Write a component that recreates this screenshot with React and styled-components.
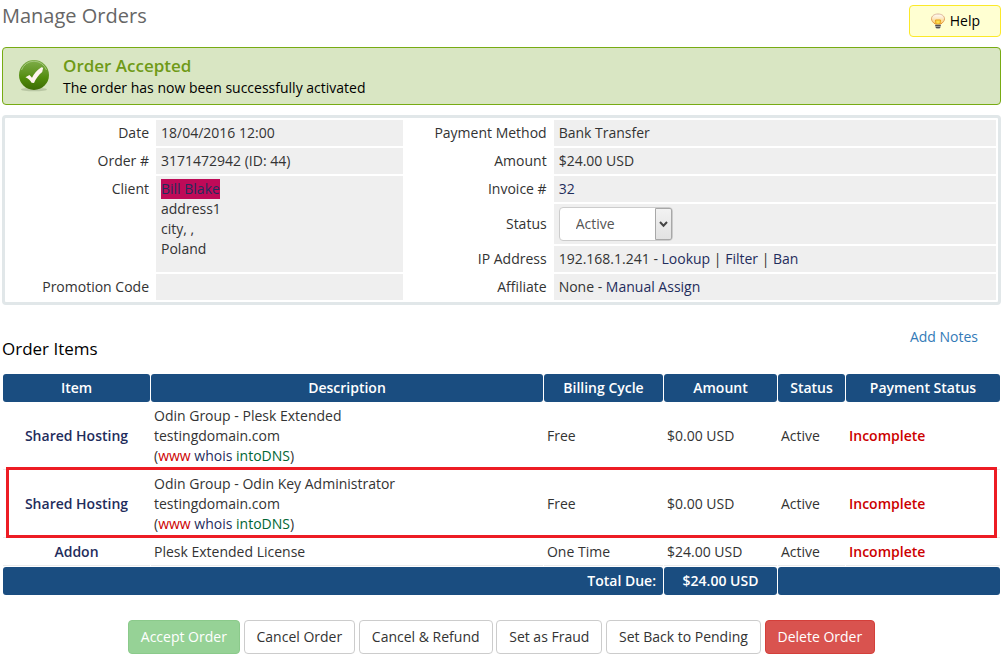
import React, { useState } from 'react';
import styled, { createGlobalStyle } from 'styled-components';

// Global styles
const GlobalStyle = createGlobalStyle`
  * {
    box-sizing: border-box;
  }

  body {
    font-family: 'Open Sans', 'Noto Sans', sans-serif;
    font-size: 14px;
    line-height: 20px;
    color: #333;
    background-color: #fff;
    margin: 0;
  }

  a {
    color: #1f2d5c;
    text-decoration: none;
  }
`;

const Page = styled.main`
  padding: 5px 4px 14px 2px;
`;

// Page header
const Header = styled.header`
  display: flex;
  justify-content: space-between;
  align-items: flex-start;
  margin-bottom: 10px;
`;

const Title = styled.h1`
  margin: 0;
  font-size: 20px;
  line-height: 22px;
  font-weight: 400;
  color: #666;
`;

const HelpButton = styled.button`
  display: flex;
  align-items: center;
  gap: 4px;
  padding: 5px 20px;
  font: inherit;
  color: #000;
  background-color: #ffffd2;
  border: 1px solid #fbe92a;
  border-radius: 4px;
  cursor: pointer;
`;

// Success message
const SuccessBox = styled.div`
  display: flex;
  align-items: center;
  gap: 13px;
  padding: 6px 15px;
  margin-bottom: 10px;
  color: #000;
  background-color: #d9e6c3;
  border: 1px solid #77ab13;
  border-radius: 4px;
`;

const SuccessTitle = styled.strong`
  display: block;
  font-size: 17px;
  line-height: 24px;
  font-weight: 600;
  color: #6f9a17;
`;

// Order details
const DetailsBox = styled.section`
  border: 3px solid #e1e7e9;
  border-radius: 4px;
  margin-bottom: 22px;
`;

const DetailsTable = styled.table`
  width: 100%;
  table-layout: fixed;
  border-collapse: separate;
  border-spacing: 2px;
`;

const Col = styled.col`
  width: ${({ $width = 'auto' }) => $width};
`;

const Label = styled.th`
  padding: 3px 5px;
  font-weight: 400;
  text-align: right;
  vertical-align: ${({ $top }) => ($top ? 'top' : 'middle')};
`;

const Value = styled.td`
  height: 26px;
  padding: 3px 5px;
  background-color: #efefef;
  vertical-align: ${({ $top }) => ($top ? 'top' : 'middle')};
`;

const ClientLink = styled.a`
  display: inline-block;
  background-color: #bf0a58;
`;

const SelectWrap = styled.div`
  position: relative;
  width: 114px;
`;

const StatusSelect = styled.select`
  display: block;
  width: 100%;
  height: 34px;
  padding: 6px 16px;
  appearance: none;
  font: inherit;
  color: #555;
  background-color: #fff;
  border: 1px solid #ccc;
  border-radius: 4px;
`;

const SelectArrow = styled.span`
  position: absolute;
  top: 1px;
  right: 1px;
  bottom: 1px;
  width: 17px;
  display: flex;
  align-items: center;
  justify-content: center;
  background: linear-gradient(#f2f2f2, #e2e2e2);
  border: 1px solid #a8a8a8;
  border-radius: 0 2px 2px 0;
  pointer-events: none;
`;

// Order items
const ItemsHeader = styled.div`
  display: flex;
  justify-content: space-between;
  align-items: flex-start;
  padding-right: 23px;
  margin-bottom: 14px;
`;

const SectionTitle = styled.h2`
  margin: 12px 0 0;
  font-size: 17px;
  line-height: 20px;
  font-weight: 400;
  color: #000;
`;

const NotesLink = styled.a`
  color: #337ab7;
`;

const ItemsTable = styled.table`
  width: 100%;
  table-layout: fixed;
  border-collapse: separate;
  border-spacing: 1px;
  margin-bottom: 24px;
`;

const HeadCell = styled.th`
  height: 28px;
  padding: 4px 7px;
  font-weight: 600;
  text-align: ${({ $align }) => $align || 'center'};
  color: #fff;
  background-color: #1a4d80;
  border-radius: 3px;
`;

const Cell = styled.td`
  padding: 3px;
  text-align: ${({ $align }) => $align || 'left'};
  border-bottom: 1px solid #ebebeb;
`;

// The frame hangs on the first cell, a pseudo-element on the row adds a column
const ItemRow = styled.tr`
  position: relative;

  ${({ $marked }) =>
    $marked &&
    `
    & > td:first-child::after {
      content: '';
      position: absolute;
      top: -4px;
      right: 3px;
      bottom: 0;
      left: 3px;
      border: 3px solid #ed1c24;
      pointer-events: none;
    }
  `}
`;

const ItemLink = styled.a`
  font-weight: 600;
`;

const WwwLink = styled.a`
  color: #c00;
`;

const DnsLink = styled.a`
  color: #063;
`;

const PaymentStatus = styled.span`
  font-weight: 600;
  color: #c00;
`;

// Buttons
const Actions = styled.div`
  text-align: center;
`;

const variants = {
  default: { color: '#333', background: '#fff', border: '#ccc' },
  success: { color: '#fff', background: '#96d296', border: '#8bca8b' },
  danger: { color: '#fff', background: '#d9534f', border: '#d43f3a' },
};

const ActionButton = styled.button`
  padding: 6px 12px;
  font: inherit;
  color: ${({ $variant = 'default' }) => variants[$variant].color};
  background-color: ${({ $variant = 'default' }) => variants[$variant].background};
  border: 1px solid ${({ $variant = 'default' }) => variants[$variant].border};
  border-radius: 4px;
  cursor: pointer;
`;

const BulbIcon = () => (
  <svg width="16" height="16" viewBox="0 0 16 16" aria-hidden="true">
    <defs>
      <linearGradient id="bulb" x1="0" y1="0" x2="0" y2="1">
        <stop offset="0" stopColor="#fffdf8" />
        <stop offset="0.4" stopColor="#fdebc8" />
        <stop offset="1" stopColor="#f9cf62" />
      </linearGradient>
      <linearGradient id="bulbEdge" x1="0" y1="0" x2="0" y2="1">
        <stop offset="0" stopColor="#d9b59c" />
        <stop offset="1" stopColor="#e58f35" />
      </linearGradient>
    </defs>
    <path
      d="M8 1C4.200 1 1.500 3 1.500 5.800c0 2.200 1.700 3.900 3.700 5.200h5.600c2-1.300 3.700-3 3.700-5.200C14.500 3 11.800 1 8 1z"
      fill="url(#bulb)"
      stroke="url(#bulbEdge)"
      strokeWidth="1"
    />
    <path d="M5.500 7h5l-.5 4H6z" fill="#fde04e" stroke="#e5a01f" strokeWidth="1" />
    <path d="M5.300 11.500h5.400v2.200L9.500 15.700h-3l-1.200-2z" fill="#9c9c9c" />
    <path d="M5.300 12.500h5.400M5.800 14.500h4.400" stroke="#505050" strokeWidth="1" />
  </svg>
);

const CheckIcon = () => (
  <svg width="32" height="34" viewBox="0 0 32 34" aria-hidden="true">
    <defs>
      <linearGradient id="ball" x1="0" y1="0" x2="0" y2="1">
        <stop offset="0" stopColor="#7fae4a" />
        <stop offset="0.450" stopColor="#5f9420" />
        <stop offset="0.600" stopColor="#518c0c" />
        <stop offset="1" stopColor="#3d6b04" />
      </linearGradient>
    </defs>
    <ellipse cx="16" cy="30.500" rx="13" ry="1.800" fill="#9aa886" opacity="0.500" />
    <circle cx="16" cy="16" r="15" fill="url(#ball)" />
    <path d="M3.500 11a13.300 13.300 0 0 1 25 0" fill="none" stroke="#a3c77a" strokeWidth="1" />
    <path
      d="M7.500 18.300l4-2.300 2.500 2.800c2-4.400 5-7.600 9.400-10.500l1.800.4-1 4.200c-3.600 3-6.200 6.400-8.200 11l-2.400-.200c-1.400-2.400-3.400-4.200-6.100-5.400z"
      fill="#fff4ee"
    />
  </svg>
);

const items = [
  {
    id: 1,
    name: 'Shared Hosting',
    description: 'Odin Group - Plesk Extended',
    domain: 'testingdomain.com',
    cycle: 'Free',
    amount: '$0.00 USD',
  },
  {
    id: 2,
    name: 'Shared Hosting',
    description: 'Odin Group - Odin Key Administrator',
    domain: 'testingdomain.com',
    cycle: 'Free',
    amount: '$0.00 USD',
    marked: true,
  },
  {
    id: 3,
    name: 'Addon',
    description: 'Plesk Extended License',
    cycle: 'One Time',
    amount: '$24.00 USD',
  },
];

const App = () => {
  const [status, setStatus] = useState('Active');

  return (
    <>
      <GlobalStyle />
      <Page>
        <Header>
          <Title>Manage Orders</Title>
          <HelpButton type="button">
            <BulbIcon />
            Help
          </HelpButton>
        </Header>

        <SuccessBox role="status">
          <CheckIcon />
          <div>
            <SuccessTitle>Order Accepted</SuccessTitle>
            The order has now been successfully activated
          </div>
        </SuccessBox>

        <DetailsBox>
          <DetailsTable>
            <colgroup>
              <Col $width="147px" />
              <Col />
              <Col $width="147px" />
              <Col $width="45%" />
            </colgroup>
            <tbody>
              <tr>
                <Label scope="row">Date</Label>
                <Value>18/04/2016 12:00</Value>
                <Label scope="row">Payment Method</Label>
                <Value>Bank Transfer</Value>
              </tr>
              <tr>
                <Label scope="row">Order #</Label>
                <Value>3171472942 (ID: 44)</Value>
                <Label scope="row">Amount</Label>
                <Value>$24.00 USD</Value>
              </tr>
              <tr>
                <Label scope="row" rowSpan={3} $top>Client</Label>
                <Value rowSpan={3} $top>
                  <ClientLink href="#client">Bill Blake</ClientLink>
                  <br />
                  address1
                  <br />
                  city, ,
                  <br />
                  Poland
                </Value>
                <Label scope="row">Invoice #</Label>
                <Value><a href="#invoice">32</a></Value>
              </tr>
              <tr>
                <Label scope="row">
                  <label htmlFor="status">Status</label>
                </Label>
                <Value>
                  <SelectWrap>
                    <StatusSelect
                      id="status"
                      value={status}
                      onChange={(e) => setStatus(e.target.value)}
                    >
                      <option>Active</option>
                    </StatusSelect>
                    <SelectArrow>
                      <svg width="9" height="7" viewBox="0 0 9 7" aria-hidden="true">
                        <path d="M1 1l3.500 3.700L8 1" fill="none" stroke="#444" strokeWidth="2" />
                      </svg>
                    </SelectArrow>
                  </SelectWrap>
                </Value>
              </tr>
              <tr>
                <Label scope="row">IP Address</Label>
                <Value>
                  192.168.1.241 - <a href="#lookup">Lookup</a> | <a href="#filter">Filter</a> |{' '}
                  <a href="#ban">Ban</a>
                </Value>
              </tr>
              <tr>
                <Label scope="row">Promotion Code</Label>
                <Value />
                <Label scope="row">Affiliate</Label>
                <Value>
                  None - <a href="#assign">Manual Assign</a>
                </Value>
              </tr>
            </tbody>
          </DetailsTable>
        </DetailsBox>

        <ItemsHeader>
          <SectionTitle>Order Items</SectionTitle>
          <NotesLink href="#notes">Add Notes</NotesLink>
        </ItemsHeader>

        <ItemsTable>
          <colgroup>
            <Col $width="147px" />
            <Col />
            <Col $width="12%" />
            <Col $width="113px" />
            <Col $width="67px" />
            <Col $width="154px" />
          </colgroup>
          <thead>
            <tr>
              <HeadCell>Item</HeadCell>
              <HeadCell>Description</HeadCell>
              <HeadCell>Billing Cycle</HeadCell>
              <HeadCell>Amount</HeadCell>
              <HeadCell>Status</HeadCell>
              <HeadCell>Payment Status</HeadCell>
            </tr>
          </thead>
          <tbody>
            {items.map((item) => (
              <ItemRow key={item.id} $marked={item.marked}>
                <Cell $align="center">
                  <ItemLink href="#item">{item.name}</ItemLink>
                </Cell>
                <Cell>
                  {item.description}
                  {item.domain && (
                    <>
                      <br />
                      {item.domain}
                      <br />
                      (<WwwLink href="#www">www</WwwLink> <a href="#whois">whois</a>{' '}
                      <DnsLink href="#dns">intoDNS</DnsLink>)
                    </>
                  )}
                </Cell>
                <Cell>{item.cycle}</Cell>
                <Cell>{item.amount}</Cell>
                <Cell>Active</Cell>
                <Cell>
                  <PaymentStatus>Incomplete</PaymentStatus>
                </Cell>
              </ItemRow>
            ))}
          </tbody>
          <tfoot>
            <tr>
              <HeadCell as="td" colSpan={3} $align="right">Total Due:</HeadCell>
              <HeadCell as="td">$24.00 USD</HeadCell>
              <HeadCell as="td" colSpan={2} />
            </tr>
          </tfoot>
        </ItemsTable>

        <Actions>
          <ActionButton type="button" $variant="success">Accept Order</ActionButton>{' '}
          <ActionButton type="button">Cancel Order</ActionButton>{' '}
          <ActionButton type="button">Cancel &amp; Refund</ActionButton>{' '}
          <ActionButton type="button">Set as Fraud</ActionButton>{' '}
          <ActionButton type="button">Set Back to Pending</ActionButton>{' '}
          <ActionButton type="button" $variant="danger">Delete Order</ActionButton>
        </Actions>
      </Page>
    </>
  );
};

export default App;
